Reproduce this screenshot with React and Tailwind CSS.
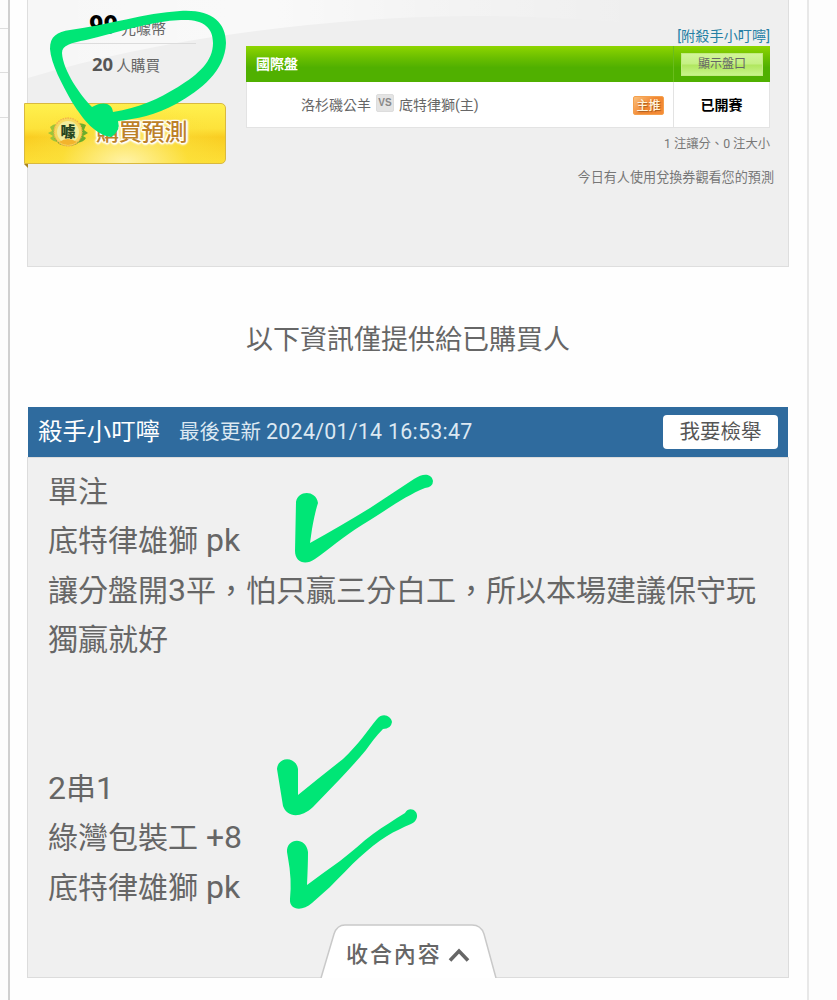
import React from "react";

// odd entries are latin text, set slightly larger
const tipLines = [
  ["單注"],
  ["底特律雄獅", " pk"],
  ["讓分盤開", "3", "平，怕只贏三分白工，所以本場建議保守玩"],
  ["獨贏就好"],
  [],
  [],
  ["", "2", "串", "1"],
  ["綠灣包裝工", " +8"],
  ["底特律雄獅", " pk"],
];

const BuyButton = () => (
  <button className="relative -ml-1 mt-[24px] flex h-[61px] w-[202px] items-center rounded-r-[5px] border border-[#d9b93f] bg-[radial-gradient(ellipse_at_50%_100%,#fff3a8_0%,#fbe13c99_45%,transparent_75%),linear-gradient(#fff04e_0%,#fde23a_42%,#f9cd22_56%,#fdde35_100%)] pl-[22px]">
    <svg className="-mt-[4px]" width="42" height="32" viewBox="0 0 42 32">
      <path d="M3 11Q8 6 14 9L12 26Q6 26 3 22L6 20 1 17 5 15Z" fill="#9cc43a" />
      <path d="M39 9Q34 6 28 8L30 27Q37 26 39 22L36 20 41 17 37 14Z" fill="#6bad2c" />
      <path d="M7 22q14 9 28 0l-5 6q-9 4-18 0Z" fill="#5f9c2c" />
      <circle cx="21" cy="16" r="14" fill="#f7d85c" stroke="#f2b04a" strokeWidth="1.3" strokeDasharray="1.5 1" />
      <circle cx="21" cy="16" r="11" fill="#f1ec9c" />
      <path d="M12 26q9-6 18 0-9 6-18 0Z" fill="#f3b42c" />
      <text x="21" y="21" textAnchor="middle" fontSize="15" fontWeight="900" fill="#28451f">
        噱
      </text>
    </svg>
    <span className="ml-[7px] -mt-[2px] text-[23px] leading-none font-medium tracking-[-0.2px] text-[#bd8128] [text-shadow:1px_1px_1px_#fff,-1px_-1px_1px_#fff,1px_-1px_1px_#fff,-1px_1px_1px_#fff,0_2px_2px_#fff,2px_0_2px_#fff,-2px_0_2px_#fff]">
      購買預測
    </span>
    <i className="absolute top-[60px] -left-px h-0 w-0 border-t-4 border-l-4 border-t-[#a98420] border-l-transparent"></i>
  </button>
);

const GameTable = () => (
  <div className="w-[524px]">
    <div className="flex h-[36px] items-center bg-[linear-gradient(#8ed500_0%,#68bd00_35%,#50b000_60%,#50b000_100%)]">
      <span className="flex-1 pt-px pl-[10px] text-[14px] font-bold text-white">國際盤</span>
      <div className="flex h-full w-[97px] items-center border-l border-[#6abd1c] pl-[7px]">
        <button className="h-[23px] w-[82px] border border-[#c1eb80] bg-[linear-gradient(#d2f59a_0%,#c4f083_48%,#b0e65e_52%,#c8f48a_100%)] pb-px text-[12px] leading-none text-[#666]">
          顯示盤口
        </button>
      </div>
    </div>
    <div className="flex h-[46px] items-center border border-t-0 border-[#e3e3e3] bg-white text-[14px] text-[#666]">
      <div className="flex flex-1 items-center pt-px pl-[54px]">
        <span>洛杉磯公羊</span>
        <span className="mx-[5px] mb-[5px] flex h-[18px] w-[18px] items-center justify-center rounded-[2px] border border-[#ddd] bg-[#e4e4e4] font-[Arial,'Liberation_Sans',sans-serif] text-[10px] font-bold text-[#888]">
          VS
        </span>
        <span>底特律獅(主)</span>
        <span className="mr-[9px] ml-auto flex h-[19px] w-[31px] items-center justify-center rounded-[2px] border border-[#f5a04c] bg-[linear-gradient(135deg,#fbc07c,#f18732_50%,#f58b37)] pt-px text-[12px] leading-none font-medium text-[#fff4dc] [text-shadow:1px_1px_1px_#a85d20]">
          主推
        </span>
      </div>
      <div className="flex h-full w-[96px] items-center justify-center border-l border-[#e3e3e3] pt-[2px] font-bold text-black">
        已開賽
      </div>
    </div>
  </div>
);

const Summary = () => (
  <section className="relative flex h-[267px] w-[762px] border border-t-0 border-[#dedede] bg-[#efefef]">
    <svg className="absolute top-0 left-0" width="760" height="80" viewBox="0 0 760 80">
      <defs>
        <linearGradient id="shine" x1="0" y1="0" x2="1" y2="0">
          <stop offset="0" stopColor="#fff" stopOpacity="0.5" />
          <stop offset="0.35" stopColor="#fff" stopOpacity="0.65" />
          <stop offset="0.6" stopColor="#fff" stopOpacity="0.3" />
          <stop offset="0.9" stopColor="#fff" stopOpacity="0" />
        </linearGradient>
      </defs>
      <path d="M0 78Q100 48 213 33Q330 17 440 16Q550 15 680 32V0H0Z" fill="url(#shine)" />
    </svg>
    <div className="relative w-[218px] shrink-0">
      <div className="ml-[28px] flex h-[44px] w-[140px] items-baseline border-b border-[#dcdcdc] pt-[8px] pl-[33px] text-[#666]">
        <b className="font-[Roboto,sans-serif] text-[25px] leading-[36px] font-black text-black">99</b>
        <span className="ml-[3px] text-[15px] leading-[36px]">元噱幣</span>
      </div>
      <div className="flex h-[35px] items-baseline pt-[2px] pl-[64px] text-[#666]">
        <b className="font-['Noto_Sans',sans-serif] text-[18.5px] leading-[36px] font-bold text-[#555]">20</b>
        <span className="ml-[3px] text-[14.7px] leading-[36px]">人購買</span>
      </div>
      <BuyButton />
    </div>
    <div className="relative flex flex-col">
      <a className="mt-[26px] h-[20px] text-right text-[14.2px] leading-[20px] text-[#257fa5]">[附殺手小叮嚀]</a>
      <GameTable />
      <p className="mt-[7px] text-right text-[12.3px] leading-[18px] text-[#777]">1 注讓分、0 注大小</p>
      <p className="mt-[16px] -mr-[4px] text-right text-[13.1px] leading-[18px] text-[#777]">
        今日有人使用兌換券觀看您的預測
      </p>
    </div>
  </section>
);

const TipPanel = () => (
  <section className="w-[762px]">
    <header className="mx-px flex h-[50px] items-center bg-[#2f6b9e] pl-[10px] text-white">
      <h2 className="text-[24.4px] leading-none">殺手小叮嚀</h2>
      <span className="ml-[19px] text-[20.5px] leading-none text-[#dce8f2]">
        最後更新 <span className="text-[21.4px] tracking-[0.25px]">2024/01/14 16:53:47</span>
      </span>
      <button className="mr-[10px] ml-auto h-[34px] w-[115px] rounded-[4px] bg-white text-[20.5px] leading-none text-[#555]">
        我要檢舉
      </button>
    </header>
    <div className="flex h-[521px] flex-col border border-[#dcdcdc] bg-[#f0f0f0]">
      <div className="pt-[8.5px] pl-[20px] text-[30px] leading-[49.5px] text-[#666]">
        {tipLines.map((parts, i) => (
          <p key={i} className="h-[49.5px] whitespace-nowrap">
            {parts.map((part, j) => (
              <span key={j} className={j % 2 ? "text-[32px] leading-none" : ""}>
                {part}
              </span>
            ))}
          </p>
        ))}
      </div>
      <button className="relative mt-auto -mb-px ml-[292px] flex h-[54px] w-[178px] items-center pt-[7px] pl-[26px]">
        <svg className="absolute inset-0" width="178" height="54" viewBox="0 0 178 54">
          <path d="M1 54 14 10Q17 1 25 1H152Q161 1 164 10L176 54Z" fill="#fff" />
          <path d="M1 54 14 10Q17 1 25 1H152Q161 1 164 10L176 54" fill="none" stroke="#c9c9c9" strokeWidth="1.5" />
        </svg>
        <span className="relative text-[22px] leading-none font-medium tracking-[1.9px] text-[#666]">收合內容</span>
        <svg className="relative ml-[6px]" width="22" height="18" viewBox="0 0 22 18">
          <path d="M2 14.5 11 5 20 14.5" fill="none" stroke="#666" strokeWidth="3.6" />
        </svg>
      </button>
    </div>
  </section>
);

// marker strokes on top of the page
const Marks = () => (
  <svg className="pointer-events-none absolute inset-0" width="837" height="1000" viewBox="0 0 837 1000" fill="#00e676">
    <path
      fillRule="evenodd"
      d="M111 137C96 135 84 121 72 102C62 84 51 64 50 49C50 36 57 32 70 30C108 25 145 13 180 11C211 9 226 22 226 43C225 71 201 90 176 104C156 115 136 119 118 121Q121 131 111 137ZM92 107C103 101 112 103 113 112C139 108 158 99 178 87C199 74 213 61 213 43C213 27 203 19 181 20C152 21 118 32 86 40C71 43 62 45 62 53C63 71 81 96 92 107Z"
    />
    <path d="M296 502C298 490 316 490 318 503Q315 512 312 529L310 543C331 531 351 520 370 508L414 479C424 472 432 474 433 481Q433 487 425 488C405 496 385 511 362 525C344 536 328 550 315 559C305 566 295 562 295 551Z" />
    <path d="M277 769C278 756 296 756 298 769L298 795Q320 777 343 759C359 744 367 731 377 719C383 712 391 716 392 722Q391 729 383 729C376 736 371 743 366 750C358 760 349 769 340 779L313 807C300 819 287 817 283 806Z" />
    <path d="M287 852C286 838 306 836 308 852Q308 864 307 885Q323 873 340 861C352 852 362 842 373 834C384 826 394 820 405 813C409 806 418 810 417 817Q416 822 411 824C402 828 395 831 387 836C377 842 369 849 360 857C350 866 340 877 330 887L312 903C302 912 289 910 290 899Q292 879 288 858Z" />
  </svg>
);

export default function App() {
  return (
    <div className="relative flex h-[1000px] w-[837px] overflow-hidden bg-[#fdfdfd] font-[Roboto,'Noto_Sans_CJK_TC',sans-serif]">
      <aside className="w-[10px] shrink-0 border-r-2 border-[#cfcfcf] bg-[#fcfcfc] shadow-[1px_0_3px_#ddd]">
        <div className="h-[29px] border-b border-[#ddd]"></div>
        <div className="h-[44px] border-b border-[#ddd]"></div>
        <div className="h-[45px] border-b border-[#ddd]"></div>
      </aside>
      <main className="w-[799px] shrink-0 border-r-2 border-[#e8e8e8] bg-[#fefefe] pl-[17px]">
        <Summary />
        <p className="flex h-[140px] w-[762px] items-center justify-center pt-[6px] text-[27px] text-[#666]">
          以下資訊僅提供給已購買人
        </p>
        <TipPanel />
      </main>
      <Marks />
    </div>
  );
}
